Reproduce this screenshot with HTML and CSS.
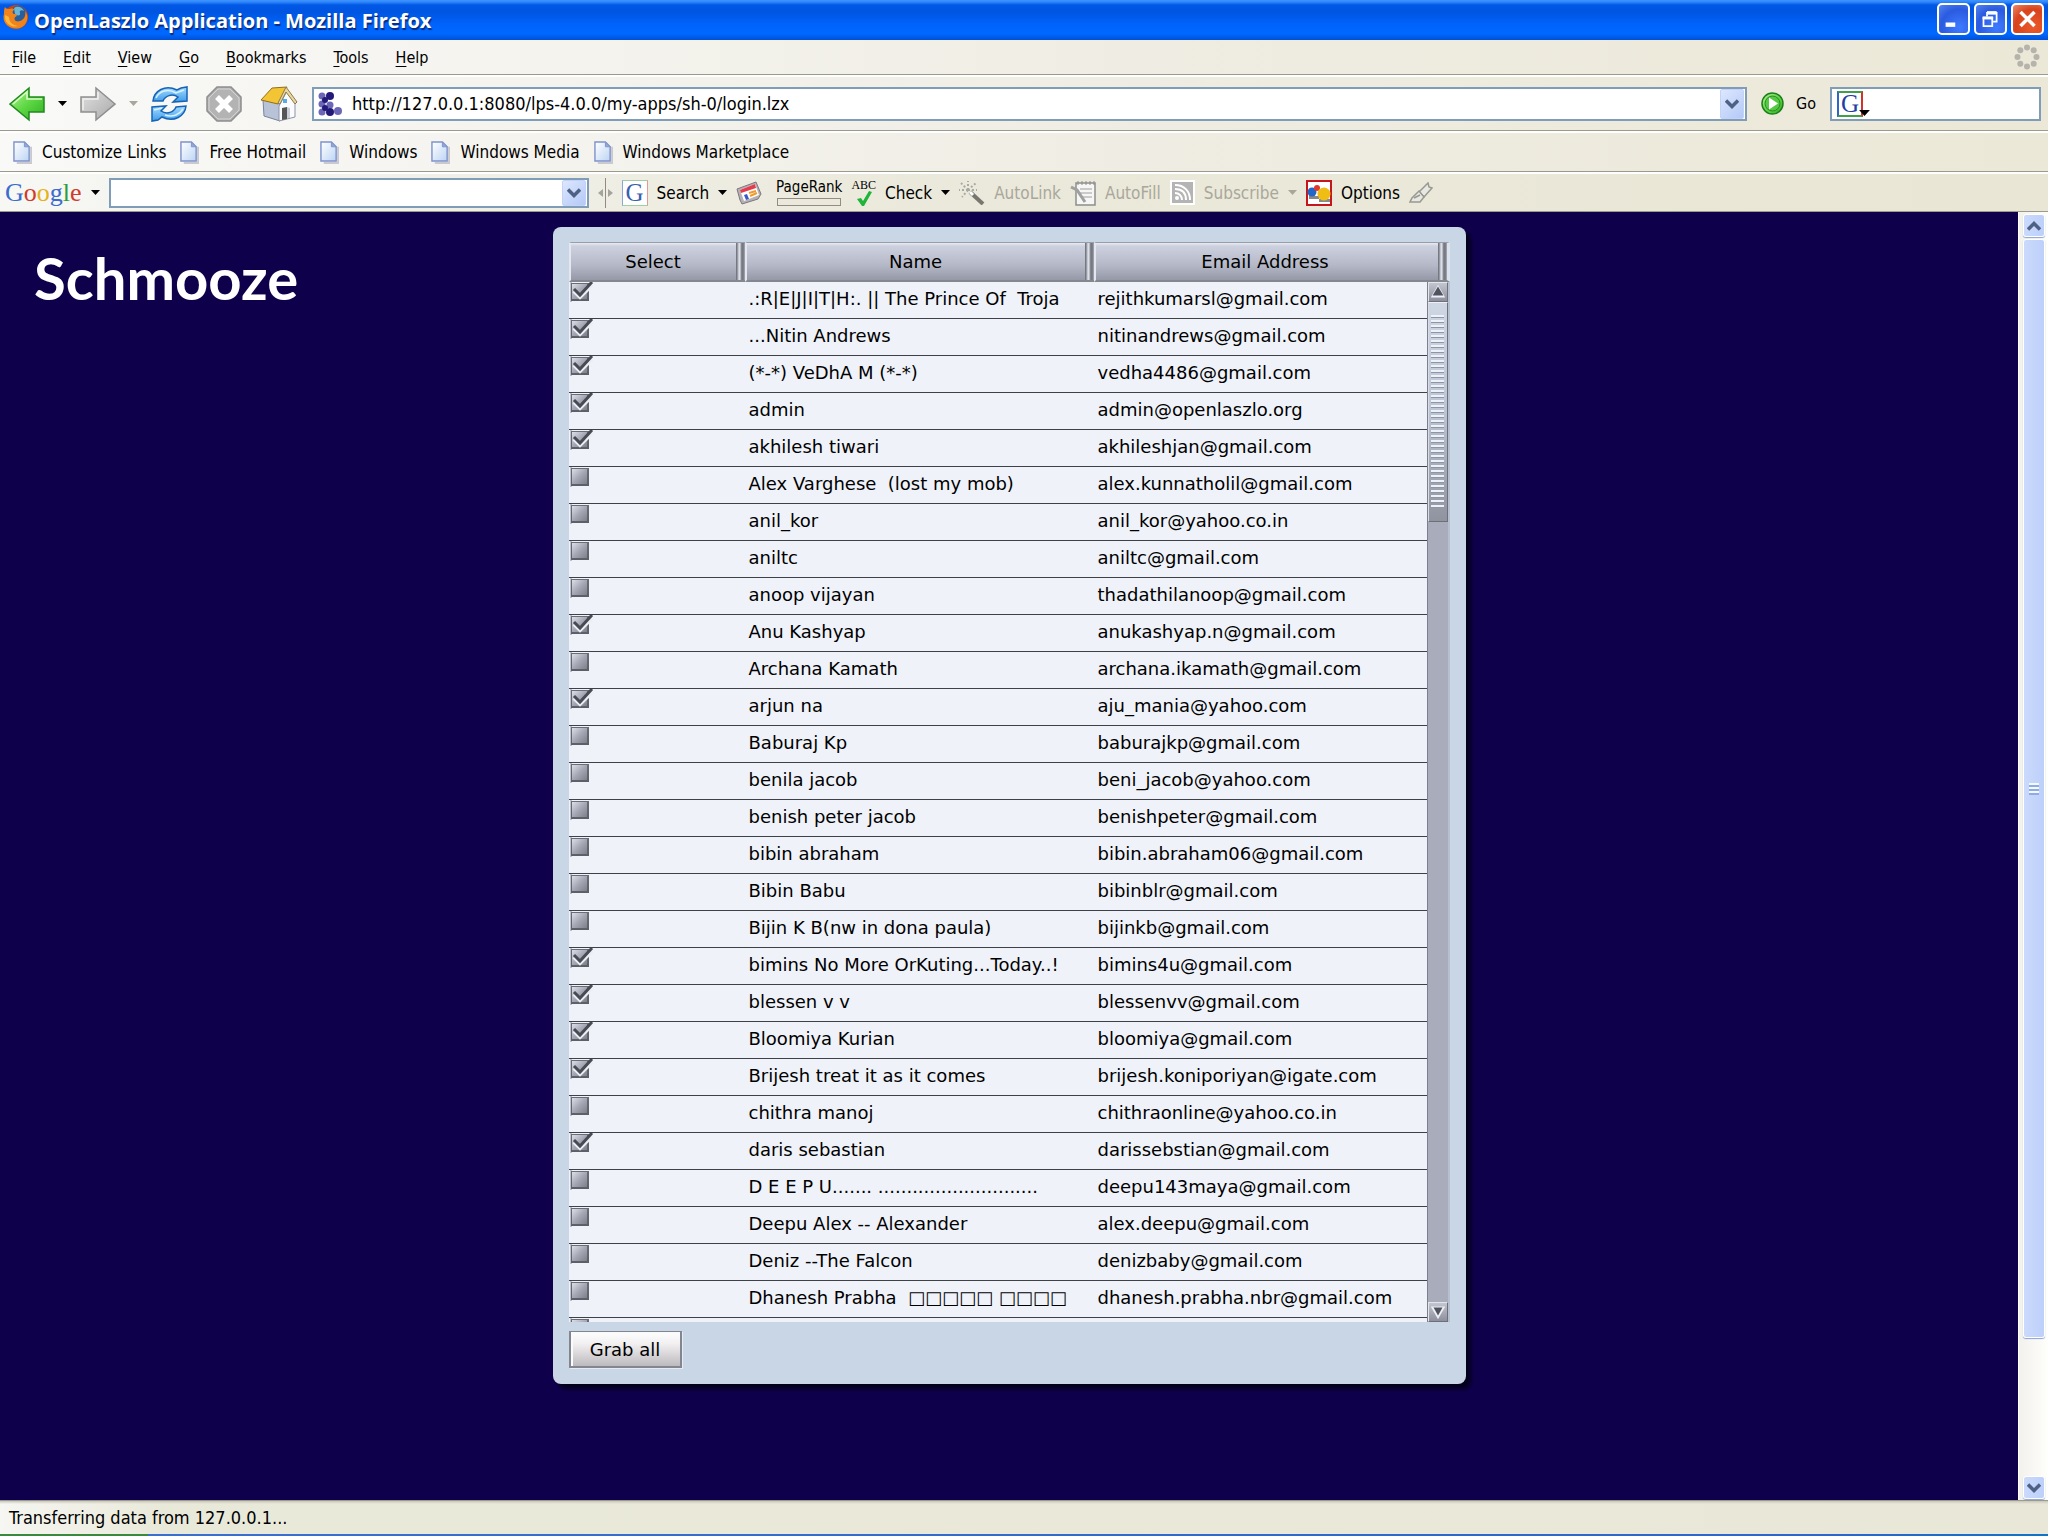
FILE: index.html
```html
<!DOCTYPE html>
<html lang="en">
<head>
    <meta charset="UTF-8">
    <meta name="viewport" content="width=device-width, initial-scale=1.0">
    <title>OpenLaszlo Application - Mozilla Firefox</title>
    <link rel="stylesheet" href="styles.css">
</head>
<body>
    <!-- Shared icon shapes -->
    <svg class="defs" width="0" height="0" aria-hidden="true">
        <defs>
            <linearGradient id="green" x1="0" y1="0" x2="1" y2="1">
                <stop offset="0" stop-color="#b9f59a"/><stop offset=".5" stop-color="#5fd845"/><stop offset="1" stop-color="#2fae22"/>
            </linearGradient>
            <linearGradient id="grey" x1="0" y1="0" x2="1" y2="1">
                <stop offset="0" stop-color="#e2e2e2"/><stop offset="1" stop-color="#a9a9a9"/>
            </linearGradient>
            <linearGradient id="blue" x1="0" y1="0" x2="0" y2="1">
                <stop offset="0" stop-color="#a5dcff"/><stop offset="1" stop-color="#3f9cea"/>
            </linearGradient>
            <linearGradient id="paper" x1="0" y1="0" x2="1" y2="1">
                <stop offset="0" stop-color="#ffffff"/><stop offset="1" stop-color="#bcd4f4"/>
            </linearGradient>
            <symbol id="page" viewBox="0 0 20 24">
                <path d="M4 23h15V6" fill="none" stroke="#c9c9cf" stroke-width="2"/>
                <path d="M1 1h11l5 5v15H1z" fill="url(#paper)" stroke="#7f93cb" stroke-width="1.5"/>
                <path d="M12 1v5h5z" fill="#8fa8dc" stroke="#7f93cb"/>
            </symbol>
            <symbol id="down" viewBox="0 0 9 5"><path d="M0 0h9L4.500 5z" fill="currentColor"/></symbol>
            <symbol id="chevron" viewBox="0 0 14 10"><path d="M1 1.500l6 6 6-6" fill="none" stroke="#4d6185" stroke-width="3.500"/></symbol>
        </defs>
    </svg>

    <header class="titlebar">
        <svg class="firefox" viewBox="0 0 26 26">
            <circle cx="13" cy="13" r="12" fill="#c8440c"/>
            <circle cx="15" cy="10" r="8" fill="#2a5d9c"/>
            <path d="M11 4c4-3 9 0 10 3-3-2-5 0-4 2 1 3-3 3-5 1z" fill="#69b7d4"/>
            <path d="M2 3c1 2 3 2 5 2 2-1 4 0 5 1-3 0-3 3-1 4 3 0 4 2 1 3-2 4 3 6 7 3 3-2 4-6 3-9 4 5 3 12-3 16C9 28-2 20 1 10c0-3 0-5 1-7z" fill="#f0831c"/>
            <path d="M2 11c-1 8 6 13 13 11-6-1-9-4-9-9z" fill="#f9b83c"/>
        </svg>
        <h1 class="window-title">OpenLaszlo Application - Mozilla Firefox</h1>
        <div class="window-buttons">
            <button class="win-btn" aria-label="Minimize"><svg viewBox="0 0 32 32"><path d="M7 20h11v5H7z" fill="#fff"/></svg></button>
            <button class="win-btn" aria-label="Restore"><svg viewBox="0 0 32 32" fill="none" stroke="#fff"><path d="M12 13V9h11v10h-4" stroke-width="2"/><path d="M12 9h11" stroke-width="4"/><path d="M8 14h10v10H8z" stroke-width="2"/><path d="M7 15h12" stroke-width="3"/></svg></button>
            <button class="win-btn close" aria-label="Close"><svg viewBox="0 0 32 32"><path d="M8 8l16 16M24 8L8 24" stroke="#fff" stroke-width="4"/></svg></button>
        </div>
    </header>

    <nav class="menubar">
        <a href="#"><u>F</u>ile</a>
        <a href="#"><u>E</u>dit</a>
        <a href="#"><u>V</u>iew</a>
        <a href="#"><u>G</u>o</a>
        <a href="#"><u>B</u>ookmarks</a>
        <a href="#"><u>T</u>ools</a>
        <a href="#"><u>H</u>elp</a>
        <svg class="throbber" viewBox="0 0 26 26" fill="#b5b3ab">
            <circle cx="13" cy="3.500" r="3"/><circle cx="19.700" cy="6.300" r="3"/><circle cx="22.500" cy="13" r="3"/><circle cx="19.700" cy="19.700" r="3"/>
            <circle cx="13" cy="22.500" r="3"/><circle cx="6.300" cy="19.700" r="3"/><circle cx="3.500" cy="13" r="3"/><circle cx="6.300" cy="6.300" r="3"/>
        </svg>
    </nav>

    <div class="navbar">
        <button class="tool history" aria-label="Back">
            <svg width="36" height="36" viewBox="0 0 36 36"><path d="M1 18L20 2v9h15v15H20v8z" fill="url(#green)" stroke="#1f8a1c" stroke-width="1.500"/><path d="M4 18L18 6v7h15" fill="none" stroke="#d8fbc6" stroke-width="1.500"/></svg>
            <svg class="arrow"><use href="#down"/></svg>
        </button>
        <button class="tool history disabled" aria-label="Forward">
            <svg width="36" height="36" viewBox="0 0 36 36"><path d="M35 18L16 2v9H1v15h15v8z" fill="url(#grey)" stroke="#8e8e8e" stroke-width="1.500"/><path d="M3 24V13h15V6" fill="none" stroke="#f1f1f1" stroke-width="1.500"/></svg>
            <svg class="arrow"><use href="#down"/></svg>
        </button>
        <button class="tool reload" aria-label="Reload">
            <svg width="37" height="36" viewBox="0 0 37 36" fill="url(#blue)" stroke="#1763b5" stroke-width="1.500">
                <path d="M2 15C3 5 14-2 26 4l4-2 6-1v14l-14 1 5-5c-6-4-13-1-15 4z"/>
                <path d="M35 20c-1 10-12 17-24 11l-4 3-6 1V21l14-1-5 5c6 4 13 1 15-4z"/>
                <path d="M5 12c3-7 12-10 20-5l8-3" fill="none" stroke="#d8f2ff"/>
                <path d="M3 24l8-2M14 29c8 3 15-1 18-6" fill="none" stroke="#d8f2ff"/>
            </svg>
        </button>
        <button class="tool stop" aria-label="Stop">
            <svg width="36" height="36" viewBox="0 0 36 36"><path d="M11 1h14l10 10v14L25 35H11L1 25V11z" fill="#b3b3b3" stroke="#8f8f8f" stroke-width="1.500"/><path d="M12 3h12l9 9v12l-9 9H12l-9-9V12z" fill="none" stroke="#d4d4d4"/><path d="M11 11l14 14M25 11L11 25" stroke="#fff" stroke-width="5.500"/></svg>
        </button>
        <button class="tool" aria-label="Home">
            <svg width="38" height="36" viewBox="0 0 38 36">
                <path d="M3 14l17 4v17L4 30z" fill="#b9c3d8" stroke="#79839a"/>
                <path d="M19 20L27 5l8 12v14l-16 4z" fill="#fbfcff" stroke="#8c93a6"/>
                <path d="M22 22l5-1v12l-5 1z" fill="#555"/><path d="M27 21l3 1v10h-3z" fill="#c9cdd8"/>
                <path d="M23 13h4v4h-4z" fill="#58a9ee"/>
                <path d="M1 14L12 2l15-1-9 17z" fill="#f3c534" stroke="#92701a"/>
                <path d="M26 1l11 15-2 2L26 6l-6 12-2-1z" fill="#ead8a0" stroke="#8c7a4c"/>
            </svg>
        </button>
        <div class="field address">
            <svg class="site-icon" viewBox="0 0 24 24">
                <g fill="#6c66b8"><circle cx="4" cy="4" r="3.500"/><circle cx="4" cy="12" r="3.500"/><circle cx="4" cy="20" r="3.500"/><circle cx="12" cy="13" r="3.500"/><circle cx="20" cy="19" r="4"/></g>
                <g fill="#231a78"><circle cx="12" cy="4" r="4"/><circle cx="12" cy="20" r="4"/><circle cx="7" cy="8" r="3"/><circle cx="7" cy="16" r="3"/></g>
            </svg>
            <input type="text" aria-label="Address" value="http://127.0.0.1:8080/lps-4.0.0/my-apps/sh-0/login.lzx">
            <button class="drop" aria-label="Show history"><svg><use href="#chevron"/></svg></button>
        </div>
        <button class="tool go">
            <svg width="23" height="23" viewBox="0 0 23 23"><circle cx="11.500" cy="11.500" r="10.500" fill="url(#green)" stroke="#1b7e1b" stroke-width="1.500"/><circle cx="11.500" cy="11.500" r="7.500" fill="#58c744" stroke="#278c22"/><path d="M8 5.500l9 6-9 6z" fill="#fff"/></svg>
            Go
        </button>
        <div class="field search">
            <span class="google-g">G</span>
            <svg class="engine-arrow"><use href="#down"/></svg>
            <input type="text" aria-label="Search the web">
        </div>
    </div>

    <nav class="bookmarks">
        <a href="#"><svg><use href="#page"/></svg>Customize Links</a>
        <a href="#"><svg><use href="#page"/></svg>Free Hotmail</a>
        <a href="#"><svg><use href="#page"/></svg>Windows</a>
        <a href="#"><svg><use href="#page"/></svg>Windows Media</a>
        <a href="#"><svg><use href="#page"/></svg>Windows Marketplace</a>
    </nav>

    <div class="googlebar">
        <button class="tool">
            <span class="google-logo"><b class="g-blue">G</b><b class="g-red">o</b><b class="g-yellow">o</b><b class="g-blue">g</b><b class="g-green">l</b><b class="g-red">e</b></span>
            <svg class="arrow"><use href="#down"/></svg>
        </button>
        <div class="field query">
            <input type="text" aria-label="Google search">
            <button class="drop" aria-label="Recent searches"><svg><use href="#chevron"/></svg></button>
        </div>
        <svg width="15" height="30" viewBox="0 0 15 30"><path d="M7.500 0v30" stroke="#8f8d82"/><path d="M5 11v8l-5-4zM10 11v8l5-4z" fill="#a5a49c"/></svg>
        <button class="tool"><span class="google-g soft">G</span>Search <svg class="arrow"><use href="#down"/></svg></button>
        <button class="tool" aria-label="News">
            <svg width="26" height="24" viewBox="0 0 26 24">
                <path d="M1 8L20 1l5 12-3 5-16 5-2-4z" fill="#b5b1b5" stroke="#7b777c"/>
                <path d="M4 9l15-6 4 11-15 6z" fill="#fff"/>
                <path d="M4 9l15-6 1 4-15 5z" fill="#e43b4e"/>
                <path d="M8 14l3-1 2 5-3 1z" fill="#3c58c8"/><path d="M13 12l7-2M14 15l7-3" stroke="#f09a2c" stroke-width="2"/>
            </svg>
        </button>
        <button class="tool pagerank">PageRank<span class="rank-bar"></span></button>
        <button class="tool">
            <span class="spell">ABC<svg width="16" height="15" viewBox="0 0 16 15"><path d="M1 8l4-1 2 3 6-10 3 1-8 14H6z" fill="#1eb53a"/></svg></span>
            Check <svg class="arrow"><use href="#down"/></svg>
        </button>
        <button class="tool disabled">
            <svg width="26" height="25" viewBox="0 0 26 25"><path d="M11 12l13 12" stroke="#77766f" stroke-width="4"/><path d="M11 12l3 3" stroke="#fff" stroke-width="3"/><path d="M9 10V1M9 10L2 3M9 10l8-7M9 10H0M9 10l-6 7M9 10l9 0" stroke="#aaa9a2" stroke-width="2" stroke-dasharray="2 2"/></svg>
            AutoLink
        </button>
        <button class="tool disabled">
            <svg width="26" height="26" viewBox="0 0 26 26"><path d="M6 3h19v22H6z" fill="#f6f6f4" stroke="#8d8d8d" stroke-width="1.500"/><path d="M8 1v4M12 1v4M16 1v4M20 1v4M24 1v4" stroke="#8d8d8d"/><path d="M10 9h12M10 13h12M12 17h10" stroke="#bcbcbc" stroke-width="1.500"/><path d="M1 7l6 3 8 12" fill="none" stroke="#a0a0a0" stroke-width="3"/></svg>
            AutoFill
        </button>
        <button class="tool disabled">
            <svg width="25" height="25" viewBox="0 0 25 25"><path d="M0 0h25v25H0z" fill="#fff"/><path d="M2 2h21v21H2z" fill="#b4b4b4"/><path d="M5 9c7 0 11 4 11 11M5 5c9 0 15 6 15 15" fill="none" stroke="#fff" stroke-width="2"/><path d="M5 13c4 0 7 3 7 7" fill="none" stroke="#fff" stroke-width="2"/><circle cx="7" cy="18" r="2" fill="#fff"/></svg>
            Subscribe <svg class="arrow"><use href="#down"/></svg>
        </button>
        <button class="tool">
            <svg width="26" height="26" viewBox="0 0 26 26"><path d="M1 1h24v24H1z" fill="#fff" stroke="#c5161b" stroke-width="2"/><path d="M3 16h10v3H3zM13 19h11v3H13z" fill="#888"/><circle cx="6" cy="12" r="4.500" fill="#2366c9"/><circle cx="11" cy="8" r="3" fill="#e0382c"/><circle cx="18" cy="14" r="6.500" fill="#f0bd14"/></svg>
            Options
        </button>
        <button class="tool highlight" aria-label="Highlight">
            <svg width="24" height="22" viewBox="0 0 24 22" fill="#e8e8e2" stroke="#989890" stroke-width="1.500"><path d="M10 10l9-9 1 4 3 1-8 9z"/><path d="M10 9l5 6-4 5H1l2-4z"/><path d="M5 16l6-3" /></svg>
        </button>
    </div>

    <div class="viewport">
        <main class="app">
            <h2 class="brand">Schmooze</h2>
            <section class="panel">
                <div class="grid">
                    <table class="contacts">
                        <thead>
                            <tr><th class="col-select">Select</th><th class="col-name">Name</th><th class="col-email">Email Address</th></tr>
                        </thead>
                        <tbody>
                            <tr><td><input type="checkbox" aria-label="Select R E J I T H" checked></td><td>.:R|E|J|I|T|H:. || The Prince Of&nbsp; Troja</td><td>rejithkumarsl@gmail.com</td></tr>
                            <tr><td><input type="checkbox" aria-label="Select Nitin Andrews" checked></td><td>...Nitin Andrews</td><td>nitinandrews@gmail.com</td></tr>
                            <tr><td><input type="checkbox" aria-label="Select VeDhA M" checked></td><td>(*-*) VeDhA M (*-*)</td><td>vedha4486@gmail.com</td></tr>
                            <tr><td><input type="checkbox" aria-label="Select admin" checked></td><td>admin</td><td>admin@openlaszlo.org</td></tr>
                            <tr><td><input type="checkbox" aria-label="Select akhilesh tiwari" checked></td><td>akhilesh tiwari</td><td>akhileshjan@gmail.com</td></tr>
                            <tr><td><input type="checkbox" aria-label="Select Alex Varghese"></td><td>Alex Varghese&nbsp; (lost my mob)</td><td>alex.kunnatholil@gmail.com</td></tr>
                            <tr><td><input type="checkbox" aria-label="Select anil_kor"></td><td>anil_kor</td><td>anil_kor@yahoo.co.in</td></tr>
                            <tr><td><input type="checkbox" aria-label="Select aniltc"></td><td>aniltc</td><td>aniltc@gmail.com</td></tr>
                            <tr><td><input type="checkbox" aria-label="Select anoop vijayan"></td><td>anoop vijayan</td><td>thadathilanoop@gmail.com</td></tr>
                            <tr><td><input type="checkbox" aria-label="Select Anu Kashyap" checked></td><td>Anu Kashyap</td><td>anukashyap.n@gmail.com</td></tr>
                            <tr><td><input type="checkbox" aria-label="Select Archana Kamath"></td><td>Archana Kamath</td><td>archana.ikamath@gmail.com</td></tr>
                            <tr><td><input type="checkbox" aria-label="Select arjun na" checked></td><td>arjun na</td><td>aju_mania@yahoo.com</td></tr>
                            <tr><td><input type="checkbox" aria-label="Select Baburaj Kp"></td><td>Baburaj Kp</td><td>baburajkp@gmail.com</td></tr>
                            <tr><td><input type="checkbox" aria-label="Select benila jacob"></td><td>benila jacob</td><td>beni_jacob@yahoo.com</td></tr>
                            <tr><td><input type="checkbox" aria-label="Select benish peter jacob"></td><td>benish peter jacob</td><td>benishpeter@gmail.com</td></tr>
                            <tr><td><input type="checkbox" aria-label="Select bibin abraham"></td><td>bibin abraham</td><td>bibin.abraham06@gmail.com</td></tr>
                            <tr><td><input type="checkbox" aria-label="Select Bibin Babu"></td><td>Bibin Babu</td><td>bibinblr@gmail.com</td></tr>
                            <tr><td><input type="checkbox" aria-label="Select Bijin K B"></td><td>Bijin K B(nw in dona paula)</td><td>bijinkb@gmail.com</td></tr>
                            <tr><td><input type="checkbox" aria-label="Select bimins" checked></td><td>bimins No More OrKuting...Today..!</td><td>bimins4u@gmail.com</td></tr>
                            <tr><td><input type="checkbox" aria-label="Select blessen v v" checked></td><td>blessen v v</td><td>blessenvv@gmail.com</td></tr>
                            <tr><td><input type="checkbox" aria-label="Select Bloomiya Kurian" checked></td><td>Bloomiya Kurian</td><td>bloomiya@gmail.com</td></tr>
                            <tr><td><input type="checkbox" aria-label="Select Brijesh" checked></td><td>Brijesh treat it as it comes</td><td>brijesh.koniporiyan@igate.com</td></tr>
                            <tr><td><input type="checkbox" aria-label="Select chithra manoj"></td><td>chithra manoj</td><td>chithraonline@yahoo.co.in</td></tr>
                            <tr><td><input type="checkbox" aria-label="Select daris sebastian" checked></td><td>daris sebastian</td><td>darissebstian@gmail.com</td></tr>
                            <tr><td><input type="checkbox" aria-label="Select D E E P U"></td><td>D E E P U....... ............................</td><td>deepu143maya@gmail.com</td></tr>
                            <tr><td><input type="checkbox" aria-label="Select Deepu Alex"></td><td>Deepu Alex -- Alexander</td><td>alex.deepu@gmail.com</td></tr>
                            <tr><td><input type="checkbox" aria-label="Select Deniz"></td><td>Deniz --The Falcon</td><td>denizbaby@gmail.com</td></tr>
                            <tr><td><input type="checkbox" aria-label="Select Dhanesh Prabha"></td><td>Dhanesh Prabha&nbsp; □□□□□ □□□□</td><td>dhanesh.prabha.nbr@gmail.com</td></tr>
                            <tr><td><input type="checkbox" aria-label="Select next contact"></td><td></td><td></td></tr>
                        </tbody>
                    </table>
                    <div class="list-scroll">
                        <button aria-label="Scroll list up"><svg viewBox="0 0 20 20"><path d="M10 2l8 14H2z" fill="#eef0f5"/><path d="M10 4l6 10H4z" fill="#50535e"/></svg></button>
                        <div class="list-track"><div class="list-thumb"></div></div>
                        <button aria-label="Scroll list down"><svg viewBox="0 0 20 20"><path d="M10 18l8-14H2z" fill="#eef0f5"/><path d="M10 14l5-9H5z" fill="#50535e"/></svg></button>
                    </div>
                </div>
                <button class="grab">Grab all</button>
            </section>
        </main>
        <div class="page-scroll">
            <button aria-label="Scroll page up"><svg class="flip"><use href="#chevron"/></svg></button>
            <div class="page-track"><div class="page-thumb"><i></i></div></div>
            <button aria-label="Scroll page down"><svg><use href="#chevron"/></svg></button>
        </div>
    </div>

    <footer class="statusbar">Transferring data from 127.0.0.1...</footer>
    <div class="taskbar"></div>
</body>
</html>
```
FILE: styles.css
```css
* {
    box-sizing: border-box;
}

body {
    margin: 0;
    height: 100vh;
    display: flex;
    flex-direction: column;
    overflow: hidden;
    background: #0f004c;
    color: #000;
    font-family: "DejaVu Sans Condensed", "DejaVu Sans", sans-serif;
    font-size: 17px;
}

button,
input {
    font: inherit;
    color: inherit;
}

button {
    border: 0;
    padding: 0;
    background: none;
}

a {
    color: inherit;
    text-decoration: none;
}

.defs {
    position: absolute;
}

/* Title bar */
.titlebar {
    flex: none;
    height: 40px;
    display: flex;
    align-items: center;
    gap: 5px;
    padding: 0 4px 0 3px;
    background: linear-gradient(#3f96ff 0, #2f86fb 2px, #0058e6 5px, #0055e0 12px, #0063fb 24px, #0068ff 34px, #0050d8 40px);
}

.firefox {
    width: 26px;
    height: 26px;
    margin-bottom: 6px;
}

.window-title {
    flex: 1;
    margin: 0;
    color: #fff;
    font-family: "Open Sans", sans-serif;
    font-size: 20px;
    font-weight: 700;
    text-shadow: 1px 2px 1px #0a2a80;
}

.window-buttons {
    display: flex;
    gap: 4px;
    margin-bottom: 2px;
}

.win-btn {
    width: 33px;
    height: 32px;
    border: 2px solid #fff;
    border-radius: 5px;
    background: radial-gradient(circle at 70% 80%, #3f7bff, #2a5be0 60%, #5584ee);
}

.win-btn svg {
    display: block;
    width: 100%;
    height: 100%;
}

.win-btn.close {
    background: radial-gradient(circle at 70% 80%, #ea5a2c, #d8431b 60%, #ec8a6c);
}

/* Toolbars */
.menubar,
.navbar,
.bookmarks,
.googlebar {
    flex: none;
    display: flex;
    align-items: center;
    border-bottom: 1px solid #9c9a8c;
    background: linear-gradient(to right, #f9f9f8, #efede3 55%, #ebe8d7);
}

.navbar,
.bookmarks,
.googlebar {
    border-top: 2px solid #fff;
}

.menubar {
    height: 35px;
    gap: 27px;
    padding: 0 8px 0 12px;
    font-size: 16px;
}

.menubar u {
    text-underline-offset: 3px;
}

.throbber {
    width: 26px;
    height: 26px;
    margin-left: auto;
}

.navbar {
    height: 56px;
    padding: 0 7px 0 9px;
}

.tool {
    flex: none;
    display: flex;
    align-items: center;
    gap: 9px;
    white-space: nowrap;
}

.arrow {
    width: 9px;
    height: 5px;
}

.history {
    gap: 13px;
    margin-right: 13px;
}

.reload,
.stop {
    margin-right: 18px;
}

.disabled {
    color: #a9a79b;
}

.field {
    display: flex;
    align-items: center;
    height: 34px;
    border: 2px solid #7f9db9;
    background: #fff;
}

.field input {
    flex: 1;
    min-width: 0;
    border: 0;
    padding: 0;
    outline: 0;
    background: transparent;
}

.address {
    flex: 1;
    gap: 10px;
    margin-left: 14px;
    padding: 0 1px 0 4px;
    font-size: 18px;
}

.site-icon {
    width: 24px;
    height: 24px;
}

.drop {
    width: 24px;
    height: 100%;
    border: 1px solid #c3d3f8;
    border-radius: 2px;
    background: linear-gradient(135deg, #dde7fe, #b4c9f7);
}

.drop svg,
.page-scroll svg {
    display: block;
    width: 14px;
    height: 10px;
    margin: 0 auto;
}

.go {
    gap: 12px;
    margin: 0 14px;
    font-size: 16px;
}

.search {
    flex: none;
    width: 211px;
    padding-left: 5px;
}

.google-g {
    width: 26px;
    height: 26px;
    border: 2px solid #3fa048;
    border-left-color: #3265c8;
    border-right-color: #d3322b;
    background: #fff;
    color: #1f3fa6;
    font-family: "Liberation Serif", serif;
    font-size: 25px;
    line-height: 22px;
    text-align: center;
}

.google-g.soft {
    border: 1px solid #9fcfa4;
    border-left-color: #8aa6dd;
    border-right-color: #e59a96;
    line-height: 24px;
    color: #3a5fae;
}

.engine-arrow {
    width: 11px;
    height: 6px;
    margin: 18px 0 0 -4px;
}

.bookmarks {
    height: 41px;
    gap: 14px;
    padding: 0 13px;
}

.bookmarks a {
    display: flex;
    align-items: center;
    gap: 10px;
}

.bookmarks svg {
    width: 19px;
    height: 23px;
}

/* Google toolbar */
.googlebar {
    height: 40px;
    gap: 9px;
    padding: 0 5px;
    background: linear-gradient(to right, #f7f7f4, #ebe9db 45%, #e9e6d5);
}

.google-logo {
    font-family: "Liberation Serif", serif;
    font-size: 26px;
    line-height: 30px;
}

.google-logo b {
    font-weight: 400;
}

.g-blue { color: #3a6bd0; }
.g-red { color: #d23a2b; }
.g-yellow { color: #e3b21c; }
.g-green { color: #2f9a3c; }

.query {
    flex: none;
    width: 480px;
    height: 30px;
    padding-right: 1px;
}

.pagerank {
    flex-direction: column;
    gap: 3px;
    margin-left: 5px;
    font-size: 15px;
    line-height: 16px;
}

.rank-bar {
    width: 64px;
    height: 8px;
    border: 1px solid #8f8d85;
    background: #ece9dc;
}

.spell {
    display: flex;
    flex-direction: column;
    align-items: center;
    font-family: "Liberation Serif", serif;
    font-size: 12px;
    line-height: 11px;
}

/* Page */
.viewport {
    flex: 1;
    min-height: 0;
    display: flex;
}

.app {
    flex: 1;
    min-width: 0;
    display: grid;
    grid-template-columns: 1fr minmax(0, 913px) 1fr;
    grid-template-rows: minmax(0, 1fr);
    padding: 15px 0 116px;
}

.brand {
    margin: 18px 0 0 34px;
    color: #fff;
    font-family: Lato, sans-serif;
    font-size: 58px;
    font-weight: 700;
    line-height: 66px;
}

.panel {
    display: flex;
    flex-direction: column;
    align-items: flex-start;
    gap: 9px;
    padding: 15px 16px 16px;
    border-radius: 8px;
    background: #c9d6e6;
    box-shadow: 5px 5px 4px #04001c;
    font-family: "DejaVu Sans", sans-serif;
    font-size: 18px;
}

/* The list scrollbar shares one cell with the table */
.grid {
    flex: 1;
    min-height: 0;
    width: 100%;
    display: grid;
    grid-template-rows: minmax(0, 1fr);
    overflow: hidden;
}

.grid > * {
    grid-area: 1 / 1;
}

.contacts {
    width: 100%;
    height: max-content;
    table-layout: fixed;
    border-collapse: separate;
    border-spacing: 0;
}

.contacts th {
    height: 40px;
    padding: 0 9px 0 0;
    border-top: 1px solid #9a9ca6;
    border-bottom: 2px solid #85878f;
    border-left: 2px solid #e4e7ef;
    font-weight: 400;
    background:
        linear-gradient(to right, #75787f 1px, #b9bcc8 2px, #e8eaf0 4px, #8b8e98 5px, #6f727b 7px, #a9acb5 9px) right / 9px 100% no-repeat,
        linear-gradient(#e8ebf3, #cdd1df 3px, #b5b8c6 60%, #9598a6);
}

.contacts .col-email {
    padding-right: 12px;
    border-right: 3px solid #dde3ee;
}

.col-select {
    width: 176px;
}

.col-name {
    width: 349px;
}

.contacts td {
    height: 37px;
    padding: 0 4px 3px;
    border-bottom: 1px solid #3f4148;
    background: #eff2f9;
    white-space: nowrap;
    overflow: hidden;
}

.contacts td:first-child {
    padding: 0 0 0 1px;
    vertical-align: top;
}

.contacts input {
    appearance: none;
    display: block;
    width: 24px;
    height: 20px;
    margin: 0;
    background:
        linear-gradient(135deg, #dcdfe8, #a5a8b4 50%, #7d808a) 2px 2px / 15px 15px no-repeat,
        linear-gradient(#6a6d76, #5c5f68) 1px 1px / 18px 18px no-repeat,
        linear-gradient(#bcc1cc, #bcc1cc) 0 0 / 2px 20px no-repeat;
    background-blend-mode: normal;
}

.contacts input:checked {
    background:
        url("data:image/svg+xml,%3Csvg xmlns='http://www.w3.org/2000/svg' viewBox='0 0 24 20'%3E%3Cpath d='M4 9l6 6L22 3' fill='none' stroke='%23eceef4' stroke-width='4'/%3E%3Cpath d='M4 7l6 6L22 0' fill='none' stroke='%23484b54' stroke-width='3'/%3E%3C/svg%3E"),
        linear-gradient(135deg, #dcdfe8, #a5a8b4 50%, #7d808a) 2px 2px / 15px 15px no-repeat,
        linear-gradient(#6a6d76, #5c5f68) 1px 1px / 18px 18px no-repeat,
        linear-gradient(#bcc1cc, #bcc1cc) 0 0 / 2px 20px no-repeat;
}

.list-scroll {
    justify-self: end;
    width: 23px;
    margin-top: 40px;
    display: flex;
    flex-direction: column;
    border-left: 1px solid #7d808a;
    border-right: 2px solid #b6c0cf;
    background: #a9acbb;
}

.list-scroll button {
    flex: none;
    height: 20px;
    border: 1px solid #6d707a;
    border-top-color: #e3e5ec;
    border-left-color: #e3e5ec;
    background: linear-gradient(#c3c6d1, #8d909c);
}

.list-scroll svg {
    display: block;
    width: 100%;
    height: 100%;
}

.list-track {
    flex: 1;
}

.list-thumb {
    height: 22%;
    border: 1px solid #6d707a;
    border-top-color: #eef0f5;
    border-left-color: #d9dce5;
    background:
        repeating-linear-gradient(#eef2f8 0, #eef2f8 2px, #8f95a3 2px, #8f95a3 3px, transparent 3px, transparent 5px) center / 13px 195px no-repeat,
        linear-gradient(#ced6e4, #bcc5d5 50%, #8f949f);
}

.grab {
    flex: none;
    width: 113px;
    height: 37px;
    border: 2px solid #83868e;
    border-top: 1px solid #83868e;
    background: linear-gradient(#ffffff, #f1eff0 35%, #bcbabd);
    box-shadow: inset 2px 2px 0 #fbfbfb, 1px 1px 0 #e4ebf3;
}

/* Window scrollbar */
.page-scroll {
    flex: none;
    width: 30px;
    display: flex;
    flex-direction: column;
    padding: 2px 3px 1px 4px;
    border-left: 1px solid #fff;
    background: linear-gradient(to right, #f3f1ec, #fefefb);
}

.page-scroll button,
.page-thumb {
    flex: none;
    border: 1px solid #fff;
    border-radius: 3px;
    background: linear-gradient(to right, #cbdafc, #bdd0fa);
    box-shadow: 0 1px 1px #8aa3d6;
}

.page-scroll button {
    height: 23px;
}

.page-scroll .flip {
    transform: rotate(180deg);
}

.page-track {
    flex: 1;
    padding: 2px 0;
}

.page-thumb {
    height: 89%;
    display: flex;
    align-items: center;
    justify-content: center;
}

.page-thumb i {
    width: 10px;
    height: 12px;
    background: repeating-linear-gradient(#f4f8ff 0, #f4f8ff 2px, #8fabe3 2px, #8fabe3 4px);
}

.statusbar {
    flex: none;
    height: 34px;
    padding: 0 9px;
    border-top: 1px solid #9c9a8c;
    font-size: 18px;
    line-height: 34px;
    background: linear-gradient(#c9c7bb 0, transparent 3px), linear-gradient(to right, #f6f6f2, #e9e9da 8%, #e9e7d8);
}

.taskbar {
    flex: none;
    height: 2px;
    background: linear-gradient(to right, #3a8a3e 148px, #3a6fd0 148px, #2a66cc 90%, #1173c8);
}
```
